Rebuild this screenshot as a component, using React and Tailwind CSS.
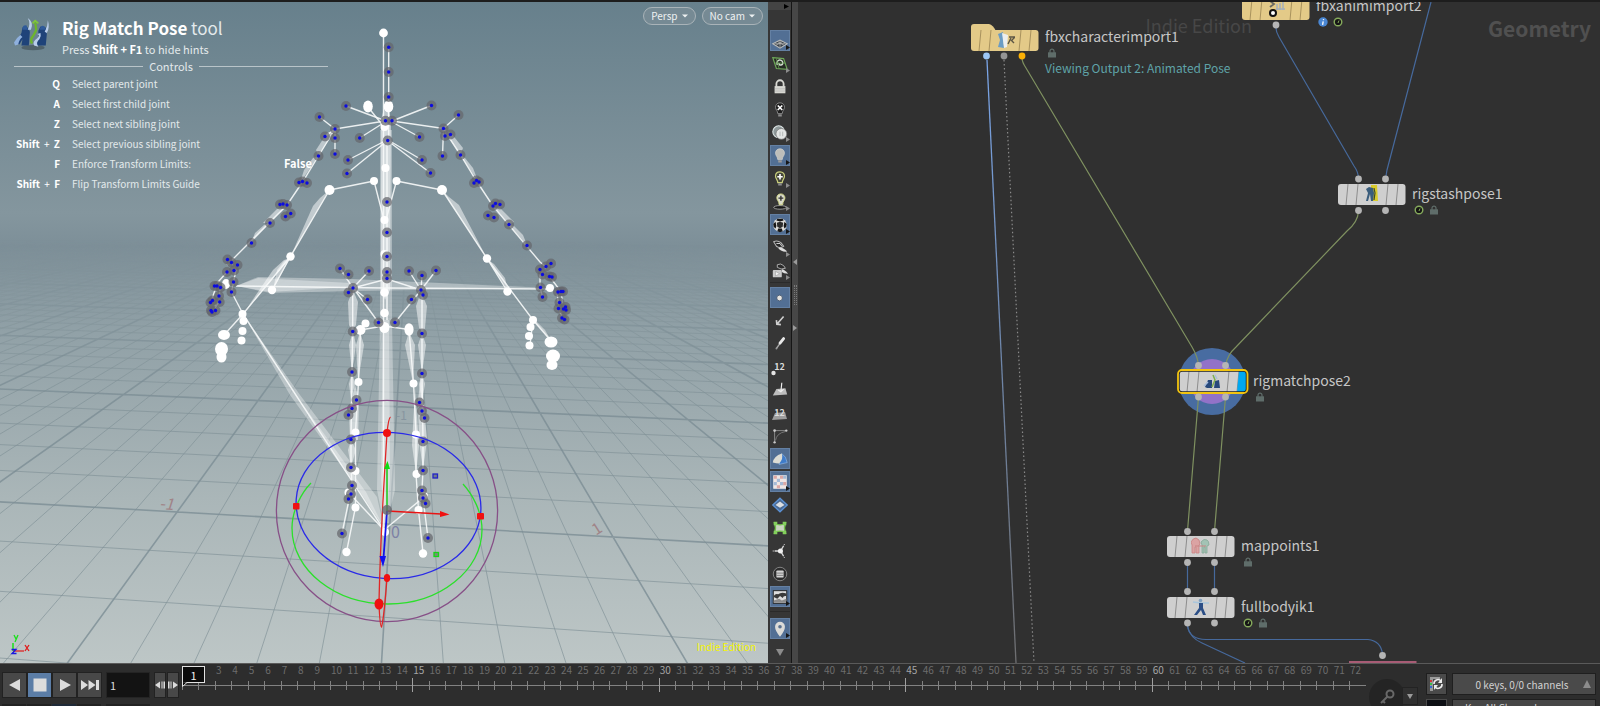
import React, { useState } from "react";

// ---------- viewport data ----------

// ground plane camera: world (x, z) -> screen
const project = (x, z) => {
  const w = -0.02403 * x - 0.547 * z + 1;
  return [
    ((208.5 * x - 224.1 * z + 389.8) / w).toFixed(1),
    ((-0.113 * x - 104.9 * z + 524.2) / w).toFixed(1),
  ];
};

const buildGrid = () => {
  let minor = "";
  let major = "";
  const add = (i, a, b) => {
    const d = `M${a[0]} ${a[1]}L${b[0]} ${b[1]}`;
    if (i % 5 === 0) major += d;
    else minor += d;
  };
  for (let i = -65; i <= 65; i++) add(i, project(i / 5, -11), project(i / 5, 0.9));
  for (let i = -55; i <= 4; i++) add(i, project(-13, i / 5), project(13, i / 5));
  return { minor, major };
};

const grid = buildGrid();

const blueJoints = [
  [388.7, 47.3], [388.7, 72], [388.7, 97], [385.5, 120.7], [392, 120.7], [387.7, 140.5],
  [346, 106], [431.5, 105.5], [319.5, 117], [335, 129], [325, 136.5], [335, 138], [335, 154],
  [318.5, 156], [359.7, 138], [419.5, 137], [348, 160], [347, 173.5], [422, 160], [430.5, 173],
  [387, 202], [302.5, 181.5], [299, 182.5], [307, 183], [287, 205], [283, 204], [280, 204.5],
  [290.7, 213.5], [285.5, 216.5], [458.5, 115], [443.5, 128.5], [445, 136], [450.5, 134.5],
  [442.5, 156], [460.5, 155], [476.5, 180.5], [474, 183], [479, 182], [493, 206], [495.5, 203.5],
  [500, 204.5], [488, 215.5], [494, 217.5], [270, 223], [251.5, 243], [227.5, 259.5],
  [231.5, 262.5], [237.5, 265], [234, 270.5], [227, 272], [233.5, 282], [231.5, 292],
  [214.5, 286], [217, 286], [220.5, 287.5], [219, 296], [219.7, 302], [210.5, 302.5],
  [212.5, 300.5], [211, 310.5], [215.5, 310.5], [212, 312], [340, 268.5], [348.5, 274.5],
  [369, 271], [353, 288], [348.5, 292.5], [367.5, 299.5], [378.5, 322.5], [395, 322.5],
  [409, 271], [422, 275.5], [436, 270.5], [421, 290], [423, 295], [411.5, 299.5],
  [352.7, 331.5], [422, 333.5], [352, 372], [422, 373.5], [387, 232.5], [387, 256.5],
  [387, 272], [387, 278.5], [509, 224.5], [527, 245.5], [546, 266.5], [551, 263.5],
  [540, 269.5], [542.5, 274.5], [549.5, 276.5], [552, 277], [540.5, 287.5], [542.5, 297],
  [558, 292], [561, 291.5], [563, 291.5], [559.5, 302.5], [558.5, 308.5], [563.5, 309],
  [565.5, 307], [566, 310], [562, 318], [564.5, 319.5], [356.5, 400], [352, 408.5],
  [348.5, 415], [419.5, 402.5], [422, 411], [424.5, 418], [351, 439.5], [423, 441.5],
  [351, 467.5], [423, 470.5], [352, 485.5], [351, 494], [348.5, 499], [422, 490.5],
  [423, 498], [425.5, 503.5], [342, 533.5], [428, 538],
];

// x, y, rx, ry
const whiteJoints = [
  [383.5, 33, 4.4, 4.4], [368, 106.5, 4.8, 6], [388.5, 106.5, 4.8, 6], [384.5, 127, 4, 4],
  [385.5, 168, 4, 4], [374, 181, 4, 4], [396.5, 181, 4, 4], [329.5, 190, 5, 5], [442, 190, 5, 5],
  [384.5, 220, 4, 4], [384.5, 254, 4, 4], [384.5, 292.5, 4.3, 4.3], [384.5, 313, 4.3, 4.3],
  [384.5, 327.5, 5, 5.5], [290.5, 256.5, 4.2, 4.2], [272, 290, 4.2, 4.2], [226, 284, 4, 5],
  [242.5, 314, 4, 4], [243.5, 321, 4, 4], [242.5, 331, 4, 4], [241.5, 340.5, 4, 4],
  [224, 335, 6, 5], [221.5, 349, 6.5, 7], [221.5, 357, 5, 5.5], [487, 258.5, 4.2, 4.2],
  [507.5, 291.5, 4.2, 4.2], [550, 288, 4, 4], [533, 320, 4, 4], [530.5, 327, 4, 4],
  [529, 336, 4, 4], [529.5, 345.5, 4, 4], [551, 342, 6.5, 5.5], [553, 356, 7, 6.5],
  [552, 365, 5.5, 5], [360.5, 330, 5, 5], [365.5, 323.5, 4, 4], [409, 329.5, 4.6, 6.2],
  [358.5, 382, 4, 4], [413.5, 383.5, 4, 4], [355.5, 432.5, 4, 4], [416, 434.5, 4, 4],
  [355.5, 471, 4, 4], [416.5, 474, 4, 4], [348.5, 492.5, 4, 4], [355.5, 507.5, 4, 4],
  [424, 496, 4, 4], [418.5, 510, 4, 4], [346.5, 552, 4.2, 4.2], [423, 553.5, 4.2, 4.2],
  [385, 532, 4, 4],
];

const boneLines = [
  "M383.5 33V530M388.7 47V140M386 121L346 106M385 121L335 129L319.5 117M385 122L359.7 138",
  "M392 121L431.5 105.5M392 121L443.5 128.5L458.5 115M392 122L419.5 137M368 107L384 127M388.5 107V127",
  "M387 140L348 160M387 141L347 173.5M388 140L422 160M388 141L430.5 173",
  "M335 129V154M335 129L325 136.5M443.5 129L442.5 156M335 129L318.5 156L302.5 182L287 205",
  "M443.5 129L460.5 155L476.5 181L493 206M374 181L329.5 190M396.5 181L442 190M374 181L384 220M396.5 181L386 220",
  "M287 205L227 265M231 262L236 270L233.5 282L231.5 292L243 314M227 272L214.5 286M220 287L219 302L213 311M216 287L211 302",
  "M493 206L540 262L546 267M546 267L540 275V287L542.5 297M549 276L561 291.5L563.5 309M557 292L559 309L563 319",
  "M290.5 256.5L243 314L224 335M272 290L290.5 256.5M329.5 190L290.5 256.5M442 190L487 258.5L533 320L552 342M487 258.5L507.5 291.5M533 320L530 345",
  "M236 286L384 288L550 289M353 288L340 268.5M353 288L369 271M353 288L387 279L421 290M353 288L367.5 299.5M354 289L378.5 322.5",
  "M421 290L409 271M421 290L422 275M421 290L436 270.5M421 290L395 322.5M360 330L384 326L409 329.5",
  "M352.7 288V331L352 372L351 439V467L352 485L342 533.5M422 290V373L423 441V470L422 490L428 538",
  "M360.5 330L358.5 382L355.5 432V471L355.5 507L346.5 552M409 330L413.5 383L416 434V474L418.5 510L423 553",
  "M243 314L384 530M349 493L384 530L424 497",
];

// long, mostly see-through bones
const bigBones = [
  "236,286 258,277 353,279 550,288 353,291 270,293",
  "236,286 258,278 350,283 350,287 270,292",
  "243,314 300,395 377,497 384,528 355,485 290,395",
  "243,314 296,395 366,492 384,528",
  "380,130 392,130 392,320 395,490 385,530 377,490 380,320",
  "383,320 389,320 390,480 385,530 381,480",
];

const limbBones = [
  "381,120 386,100 391,120 390,290 385,300 381,290",
  "353,290 348,302 349,325 352,331 356,325 358,302",
  "421,292 416,306 419,328 423,333 425,328 427,306",
  "353,331 349,345 352,372 356,345",
  "422,333 418,345 422,373 426,345",
  "360,332 356,345 358,382 364,345",
  "409,332 405,345 413,383 415,345",
  "352,372 349,384 351,400 355,384",
  "422,373 419,384 422,402 425,384",
  "355,385 349,410 350,440 358,440 359,400",
  "351,440 348,450 351,467 356,450",
  "421,375 418,400 419,440 423,470 427,440",
  "415,388 412,445 416,474 419,445",
  "335,130 318.5,156 316,150 327,133",
  "318.5,156 300,183 304,170 313,158",
  "444,130 460.5,155 463,148 451,133",
  "460,155 478,181 473,168 465,158",
  "287,206 270,223 263,223 277,209",
  "270,223 251,243 255,233 264,225",
  "493,206 509,225 514,222 500,208",
  "509,225 527,245 523,235 514,226",
  "329.5,190 290.5,256.5 313,206 320,198",
  "442,190 487,258.5 459,205 449,197",
  "290,258 243,314 273,270 284,260",
  "290,258 273,290 277,270 284,261",
  "487,259 508,291 505,278 494,264",
  "533,320 552,342 545,330 537,322",
];

const controls = [
  { keys: ["Q"], action: "Select parent joint" },
  { keys: ["A"], action: "Select first child joint" },
  { keys: ["Z"], action: "Select next sibling joint" },
  { keys: ["Shift", "Z"], action: "Select previous sibling joint" },
  { keys: ["F"], action: "Enforce Transform Limits:" },
  { keys: ["Shift", "F"], action: "Flip Transform Limits Guide" },
];

const PoseLogo = ({ className }) => (
  <svg viewBox="0 0 34 34" className={className} aria-hidden="true">
    <ellipse cx="18" cy="29" rx="11" ry="2.5" fill="#3d4b52" opacity="0.6" />
    <path d="M3 25Q4 19 7 15L8 10L13 10L15 14L14 27H7L8 21L5 26Z" fill="#1f4379" />
    <path d="M23 13L25 9L30 10L31 16L30 27H21L23 20Z" fill="#1f4379" />
    <path d="M0 24Q3 19 6 17L8 19Q5 21 4 26L1 27Z" fill="#8fb0dd" />
    <path d="M13 1Q16 6 13 12L16 12Q19 5 13 1ZM32 3Q34 10 31 15L29 14Q32 9 32 3Z" fill="#b9cdea" />
    <path d="M22 16Q25 17 22 20Q17 23 19 27L23 28Q20 24 24 21Q26 18 25 15Z" fill="#b9cdea" />
    <path d="M8 10Q9 7 12 8L13 12H8ZM25 10Q26 7 29 9L30 12H24Z" fill="#2f5a99" />
    <path d="M20 5L21 12Q20 15 18 18Q15 21 17 25" stroke="#6db52c" strokeWidth="2.2" fill="none" />
    <path d="M17.500 6L20 3.500L23 6" stroke="#7fc63a" strokeWidth="1.600" fill="none" />
  </svg>
);

// ---------- 3D viewport ----------

const Scene = () => (
  <svg
    viewBox="0 2 768 661"
    preserveAspectRatio="xMidYMid slice"
    className="absolute inset-0 h-full w-full"
    aria-hidden="true"
  >
    <defs>
      <linearGradient id="sky" x1="0" y1="0" x2="0" y2="1">
        <stop offset="0" stopColor="#67808c" />
        <stop offset="0.32" stopColor="#84969e" />
        <stop offset="0.37" stopColor="#7d8f98" />
        <stop offset="0.5" stopColor="#91a1a7" />
        <stop offset="0.75" stopColor="#aab6b8" />
        <stop offset="1" stopColor="#bdc6c6" />
      </linearGradient>
      <linearGradient id="fade" gradientUnits="userSpaceOnUse" x1="0" y1="240" x2="0" y2="400">
        <stop offset="0" stopColor="#fff" stopOpacity="0" />
        <stop offset="0.25" stopColor="#fff" stopOpacity="0.4" />
        <stop offset="0.6" stopColor="#fff" stopOpacity="0.8" />
        <stop offset="1" stopColor="#fff" />
      </linearGradient>
      <mask id="ground" maskUnits="userSpaceOnUse" x="0" y="0" width="768" height="663">
        <rect y="240" width="768" height="423" fill="url(#fade)" />
      </mask>
    </defs>
    <rect y="2" width="768" height="661" fill="url(#sky)" />
    <g mask="url(#ground)" fill="none">
      <path d={grid.minor} stroke="#7f9097" strokeWidth="1" opacity="0.65" />
      <path d={grid.major} stroke="#7c8d95" strokeWidth="1.6" opacity="0.8" />
    </g>

    {/* grid unit labels */}
    <g className="font-['Noto_Sans_CJK_SC',sans-serif]" fontSize="16">
      <text x="159" y="509" fill="#a08488" transform="rotate(4 159 509)" fontStyle="italic">-1</text>
      <text x="592" y="534" fill="#a08488" transform="rotate(-32 597 528)">1</text>
      <text x="391" y="538" fill="#7d81a5">0</text>
      <text x="396" y="420" fill="#87959f" fontSize="12">-1</text>
    </g>

    {/* bones */}
    <g fill="#fff" fillOpacity="0.34">
      {bigBones.map((points) => (
        <polygon key={points} points={points} />
      ))}
    </g>
    <g fill="#fff" fillOpacity="0.5">
      {limbBones.map((points) => (
        <polygon key={points} points={points} />
      ))}
    </g>
    <g fill="none" stroke="#f7f9fa" strokeWidth="1.4" strokeOpacity="0.9">
      {boneLines.map((d) => (
        <path key={d} d={d} />
      ))}
      <path d="M387 140V320" strokeWidth="2" strokeOpacity="0.7" />
    </g>
    <g fill="#fff">
      {whiteJoints.map(([x, y, rx, ry]) => (
        <ellipse key={`${x}-${y}`} cx={x} cy={y} rx={rx} ry={ry} />
      ))}
    </g>
    <g fill="#65666c" fillOpacity="0.72">
      {blueJoints.map(([x, y]) => (
        <circle key={`${x}-${y}`} cx={x} cy={y} r="5" />
      ))}
    </g>
    <g fill="#0c0ce0">
      {blueJoints.map(([x, y]) => (
        <circle key={`${x}-${y}`} cx={x} cy={y} r="1.7" />
      ))}
    </g>

    {/* transform handle */}
    <g fill="none" strokeWidth="1.3">
      <circle cx="387" cy="511" r="110.6" stroke="#875087" />
      <ellipse cx="388.5" cy="505.5" rx="92.5" ry="73" stroke="#2a2ae8" transform="rotate(4 388.5 505.5)" />
      <path
        d="M311 483C302 492 292 510 292 528C292 570 335 604 388 604C440 604 482 570 482 530C482 512 473 495 463 484"
        stroke="#2be02b"
      />
      <path d="M390.500 417Q388.500 418 387 433C384 480 380 550 379 604Q380 627 381.500 627Q384 618 387 578" stroke="#e02626" />
      <path d="M387 511L441 514" stroke="#e81414" strokeWidth="1.5" />
      <path d="M387 511V468" stroke="#14c814" strokeWidth="1.5" />
      <path d="M387 511L383.500 558" stroke="#1414e8" strokeWidth="1.8" />
      <rect x="433" y="474" width="4.500" height="4" fill="#6f7b8c" stroke="#2222c8" />
      <rect x="434" y="552.500" width="4.500" height="4" fill="#7c8a7c" stroke="#14d814" />
    </g>
    <circle cx="387" cy="510" r="5" fill="#66676d" fillOpacity="0.8" />
    <path d="M440 511L449.500 514.500L440 517Z" fill="#f01010" />
    <path d="M384 469L387.500 461L390 469Z" fill="#10dc10" />
    <path d="M379.500 556H386L383 567Z" fill="#1010f0" />
    <g fill="#f01010">
      <circle cx="387" cy="433" r="4" />
      <rect x="293" y="503" width="6.500" height="6.500" rx="1" />
      <rect x="477" y="513" width="7" height="6.500" rx="1" />
      <ellipse cx="387" cy="578" rx="3.200" ry="4" />
      <ellipse cx="379" cy="604" rx="4.500" ry="5.500" />
    </g>
  </svg>
);

const MenuPill = ({ children }) => (
  <button className="flex h-[18px] items-center gap-1 rounded-full border border-[#a9b3b8] bg-[#768a94] px-[7px] text-[10px] leading-none text-[#eef1f2]">
    {children}
    <svg viewBox="0 0 6 4" className="h-1 w-[6px]" aria-hidden="true">
      <path d="M0 0.500H6L3 3.500Z" fill="currentColor" />
    </svg>
  </button>
);

const Viewport = () => (
  <section className="relative w-[48%] shrink-0 overflow-hidden">
    <Scene />
    <div className="relative flex h-full flex-col justify-between">
      <div className="flex items-start justify-between">
        <div className="w-[328px] pl-[14px] pt-[13px] text-[#e3e9eb]">
          <div className="flex gap-3">
            <PoseLogo className="mt-[2px] h-9 w-9 shrink-0" />
            <div>
              <h1 className="whitespace-nowrap text-[17px] leading-[26px]">
                <b className="text-white">Rig Match Pose</b> tool
              </h1>
              <p className="text-[11px] leading-4">
                Press <b className="text-white">Shift + F1</b> to hide hints
              </p>
            </div>
          </div>
          <div className="mt-px flex items-center gap-[6px] text-[11px] leading-4">
            <span className="h-px flex-1 bg-[#b9c4c9]" />
            Controls
            <span className="h-px flex-1 bg-[#b9c4c9]" />
          </div>
          <dl className="text-[10px] leading-5">
            {controls.map(({ keys, action }) => (
              <div key={action} className="flex gap-3">
                <dt className="w-[46px] whitespace-nowrap text-right font-bold text-white">
                  {keys.length > 1 && (
                    <>
                      {keys[0]} <span className="px-[2px] font-normal">+</span>{" "}
                    </>
                  )}
                  {keys[keys.length - 1]}
                </dt>
                <dd>{action}</dd>
              </div>
            ))}
          </dl>
        </div>
        <div className="flex gap-[6px] pr-[5px] pt-[5px]">
          <MenuPill>Persp</MenuPill>
          <MenuPill>No cam</MenuPill>
        </div>
      </div>
      <div className="flex items-end justify-between pb-[6px] pl-[10px] pr-3">
        <svg viewBox="0 0 22 24" className="h-6 w-[22px]" fill="none" aria-hidden="true">
          <path d="M3 18V10" stroke="#19e019" strokeWidth="1.500" />
          <path d="M3 18H14" stroke="#e01919" strokeWidth="1.200" />
          <path d="M4 2L6 6M8 2L5 9" stroke="#19e019" strokeWidth="1.300" />
          <path d="M15 12L19 18M19 12L15 18" stroke="#e01919" strokeWidth="1.300" />
          <path d="M1.500 16.500H6L2 20.500H6.500" stroke="#1919e0" strokeWidth="1.300" />
        </svg>
        <span className="text-[10px] leading-5 text-[#f4f400]">Indie Edition</span>
      </div>
    </div>
    <span className="absolute left-[284px] top-[151px] text-[11px] font-bold leading-5 text-white">False</span>
  </section>
);

// ---------- display toolbar ----------

const bulb = "M10 2C6.500 2 5 4.500 5 7C5 9.500 7.500 11 7.500 14H12.500C12.500 11 15 9.500 15 7C15 4.500 13.500 2 10 2Z";

const icons = {
  plane: (
    <>
      <path d="M2 13L10 9L18 13L10 18Z" fill="#3a4148" stroke="#b9bbbb" strokeWidth="1.200" />
      <path d="M7 10.500L15 15M13 10.500L5 15M10 9V17M4 13H16" stroke="#b9bbbb" fill="none" strokeWidth="0.800" />
    </>
  ),
  reference: (
    <>
      <path d="M2 3L14 4L18 16L6 15Z" fill="#262b24" stroke="#6fa85a" strokeWidth="1.300" />
      <path d="M7 11C5 5 12 4 13 8C14 12 8 12 9 9" fill="none" stroke="#d4dcd2" strokeWidth="1.600" />
      <path d="M6 4L9 15M4 9H16" stroke="#6fa85a" strokeWidth="0.800" />
    </>
  ),
  lock: (
    <>
      <path d="M6 10V6.500A4 4 0 0 1 14 6.500V10" fill="none" stroke="#d8d8d2" strokeWidth="2" />
      <rect x="4" y="9" width="12" height="8" fill="#d8d8d2" />
      <path d="M4 12H16M4 14.500H16" stroke="#aaa" strokeWidth="0.600" />
    </>
  ),
  bulbOff: (
    <>
      <path d={bulb} fill="#1d1d1d" stroke="#8b8b8b" />
      <path d="M7.500 5L12.500 10M12.500 5L7.500 10" stroke="#fff" strokeWidth="1.800" />
      <path d="M8 16H12" stroke="#8b8b8b" strokeWidth="2.500" />
    </>
  ),
  spheres: (
    <>
      <circle cx="8.500" cy="8.500" r="6.500" fill="#8e9899" stroke="#e0e8e8" strokeWidth="1.200" />
      <circle cx="11.500" cy="11" r="6" fill="#e4e6e5" stroke="#777" strokeWidth="0.800" />
      <path d="M10 8.500V13.500M13 8.500V13.500" stroke="#b0b4b3" />
    </>
  ),
  bulbOn: (
    <>
      <path d={bulb} fill="#bdbdba" stroke="#dad9d4" strokeWidth="0.700" />
      <path d="M8 16H12" stroke="#9a9a9a" strokeWidth="2.500" />
    </>
  ),
  bulbAdd: (
    <>
      <path d={bulb} fill="#45463a" stroke="#c9cf7d" strokeWidth="1.300" />
      <path d="M10 4.500V10.500M7 7.500H13" stroke="#fff" strokeWidth="1.800" />
      <path d="M8 16H12" stroke="#8b8b8b" strokeWidth="2.500" />
    </>
  ),
  bulbShadow: (
    <>
      <ellipse cx="10" cy="16" rx="7" ry="2" fill="#191919" stroke="#c4c4c4" strokeWidth="0.800" />
      <path d="M11 1C7.500 1 6.500 3.500 6.500 5.500C6.500 8 9 9 9 13H13C13 9 15.500 8 15.500 5.500C15.500 3.500 14 1 11 1Z" fill="#d9dacb" stroke="#d8dd8a" />
      <path d="M11 3V8.500M8.300 5.700H13.700" stroke="#333" strokeWidth="1.500" />
    </>
  ),
  shader: (
    <>
      <circle cx="10" cy="10" r="7.500" fill="#dddcd9" />
      <path d="M7 3L13 3L14 5L10 6L6 5ZM2.500 9L5 6.500L6 11L5 14L3 12ZM17.500 9L15 6.500L14 11L15 14L17 12ZM8 14L12 14L13 17L10 18L7 17Z" fill="#151515" />
      <path d="M6.500 7.500L10 6.500L13.500 7.500L13 12L10 13.500L7 12Z" fill="#2c2c2c" />
    </>
  ),
  cards: (
    <>
      <path d="M3 3Q7 1 11 4L14 8Q10 11 6 8Z" fill="#2a2a2a" stroke="#b5b5b5" strokeWidth="1.200" />
      <path d="M6 5L10 5L12 8" stroke="#e0e0e0" fill="none" />
      <path d="M8 10Q12 8 18 14Q12 15 8 10Z" fill="#dedede" />
    </>
  ),
  snapshot: (
    <>
      <path d="M7 3Q11 1 14 4L16 7Q11 9 7 6Z" fill="#2a2a2a" stroke="#b5b5b5" />
      <path d="M12 8Q15 8 19 13Q14 13 12 11Z" fill="#dedede" />
      <rect x="2" y="9" width="10" height="8" rx="1" fill="#c9c9c9" />
      <path d="M5 10.500L9.500 13L5 15.500Z" fill="#f2f2f2" stroke="#888" strokeWidth="0.500" />
    </>
  ),
  point: <circle cx="9.500" cy="10" r="3.200" fill="#e6e3dd" stroke="#40546e" />,
  normalIn: <path d="M14 5L7 13M6 9L6.500 13.500L11 14" fill="none" stroke="#d0d0d0" strokeWidth="1.800" />,
  normalOut: (
    <>
      <path d="M6 15L11 8" stroke="#a8a8a8" strokeWidth="1.500" />
      <path d="M10 9L14 4" stroke="#e8e8e8" strokeWidth="3.200" strokeLinecap="round" />
      <circle cx="6" cy="15" r="1" fill="#999" />
    </>
  ),
  primNormal: (
    <>
      <path d="M6 9L16 8L18 15L2 16Z" fill="#bdbdbd" />
      <path d="M12 2L11 12M8 10L11 12L14 9" stroke="#eee" strokeWidth="1.300" fill="none" />
    </>
  ),
  hull: (
    <>
      <path d="M4 17V4H17" fill="none" stroke="#8f8f8f" />
      <path d="M5 15Q6 7 16 5" fill="none" stroke="#7d7d7d" />
      <circle cx="4" cy="4" r="1.500" fill="#c9c9c9" />
      <circle cx="17" cy="4" r="1.300" fill="#c9c9c9" />
      <circle cx="4" cy="17" r="1.300" fill="#c9c9c9" />
    </>
  ),
  backface: (
    <>
      <path d="M12 4L16 8L18 14L9 16Z" fill="#3f7cc9" stroke="#9ec3ef" strokeWidth="0.600" />
      <path d="M2 14Q3 7 12 4Q14 10 9 15Q6 15 2 14Z" fill="#dcdcd4" />
    </>
  ),
  checker: (
    <>
      <rect x="3" y="3" width="14" height="14" fill="#f0e6e4" stroke="#e6e6e6" />
      <path d="M3 3H6.500V6.500H3ZM10 3H13.500V6.500H10ZM6.500 13.500H10V17H6.500ZM13.500 13.500H17V10H13.500Z" fill="#dba8a5" />
      <path d="M6.500 6.500H10V10H6.500ZM13.500 6.500H17V3H13.500ZM10 10H13.500V13.500H10ZM3 10H6.500V13.500H3Z" fill="#a5bad6" />
    </>
  ),
  group: (
    <>
      <path d="M10 2.500L18 10L10 17.500L2 10Z" fill="#4a6a94" stroke="#5c92d6" strokeWidth="1.500" />
      <path d="M10 6L15 10L10 13L5 10Z" fill="#dcdfe2" />
    </>
  ),
  lattice: (
    <>
      <path d="M4 5Q10 8 16 5Q14 10 16 15Q10 12 4 15Q6 10 4 5Z" fill="#c9d3c0" stroke="#71c04a" strokeWidth="1.500" />
      <path d="M3 3H7V7H3ZM13 3H17V7H13ZM3 13H7V17H3ZM13 13H17V17H13Z" fill="#83cf5c" />
    </>
  ),
  origin: (
    <>
      <path d="M9 10H2M11.500 8.500L15 2.500M11.500 11.500L15 17.500" stroke="#d8d8d8" strokeWidth="1.500" strokeDasharray="5 1.200" />
      <circle cx="10.500" cy="10" r="2.800" fill="#f1f1f1" />
    </>
  ),
  list: (
    <>
      <circle cx="10" cy="10" r="7.500" fill="#2c2c2c" stroke="#8b8b8b" />
      <rect x="6" y="6" width="8" height="8" rx="1" fill="#d4d4d4" />
      <path d="M6 9H14M6 11.500H14" stroke="#777" />
    </>
  ),
  image: (
    <>
      <rect x="2.500" y="3" width="15" height="14" fill="#ddd" stroke="#1b1b1b" />
      <path d="M3 10Q4 6 8 7Q11 4 17 6V9Q14 8 13 11L10 9L7 12Z" fill="#3a3a3a" />
      <path d="M3 14L9 12L12 14L17 12V16.500H3Z" fill="#8c8c8c" />
    </>
  ),
  pin: (
    <>
      <path d="M10 18.500Q4.500 12 4.500 7.500A5.500 5.500 0 0 1 15.500 7.500Q15.500 12 10 18.500Z" fill="#dbdbd8" />
      <circle cx="10" cy="7.500" r="2" fill="#5a718e" />
    </>
  ),
};

const Numbered = ({ prim }) => (
  <span className="relative text-[9px] font-bold leading-none text-[#dcdcdc]">
    <svg viewBox="0 0 20 20" className="absolute -left-1 -top-1 h-5 w-5" aria-hidden="true">
      {prim ? (
        <path d="M5 9L15 8L17 15L2 16Z" fill="#9d9d9d" />
      ) : (
        <circle cx="3.500" cy="15" r="2.200" fill="#e4e4e4" />
      )}
    </svg>
    <span className="relative">12</span>
  </span>
);

const topTools = [
  { icon: "plane", label: "Construction plane", active: true, menu: true },
  { icon: "reference", label: "Reference plane", menu: true },
  { icon: "lock", label: "Lock camera" },
  { icon: "bulbOff", label: "Disable lighting" },
  { icon: "spheres", label: "Headlight", menu: true },
  { icon: "bulbOn", label: "Normal lighting", active: true, menu: true },
  { icon: "bulbAdd", label: "High quality lighting", menu: true },
  { icon: "bulbShadow", label: "Shadows", menu: true },
  { icon: "shader", label: "Materials", active: true, menu: true },
  { icon: "cards", label: "Shading", menu: true },
  { icon: "snapshot", label: "Snapshot", menu: true },
];

const displayTools = [
  { icon: "point", label: "Points", active: true },
  { icon: "normalIn", label: "Point normals" },
  { icon: "normalOut", label: "Point trails" },
  { icon: "pointNumbers", label: "Point numbers" },
  { icon: "primNormal", label: "Primitive normals" },
  { icon: "primNumbers", label: "Primitive numbers" },
  { icon: "hull", label: "Hulls" },
  { icon: "backface", label: "Backfaces", active: true },
  { icon: "checker", label: "UV texture", active: true, menu: true },
  { icon: "group", label: "Group list" },
  { icon: "lattice", label: "Lattice" },
  { icon: "origin", label: "Origin gnomon" },
  { icon: "list", label: "Visualizers" },
  { icon: "image", label: "Background image", active: true, menu: true },
];

const ToolButton = ({ icon, label, active, menu }) => (
  <button
    aria-label={label}
    className={`relative flex h-[21px] w-5 items-center justify-center border ${
      active ? "border-[#6480a3] bg-[#526f94]" : "border-transparent"
    }`}
  >
    {icon === "pointNumbers" || icon === "primNumbers" ? (
      <Numbered prim={icon === "primNumbers"} />
    ) : (
      <svg viewBox="0 0 20 20" className="h-[18px] w-[18px]" aria-hidden="true">
        {icons[icon]}
      </svg>
    )}
    {menu && (
      <svg
        viewBox="0 0 4 5"
        className={`absolute -right-px bottom-0 h-[5px] w-1 ${active ? "text-[#161616]" : "text-[#8c8c8c]"}`}
        aria-hidden="true"
      >
        <path d="M0 0V5L4 2.500Z" fill="currentColor" />
      </svg>
    )}
  </button>
);

const DisplayToolbar = () => (
  <aside className="flex w-6 shrink-0 flex-col items-center overflow-hidden border-r border-[#161616] bg-[#363636]">
    <div className="flex h-2 w-full items-center justify-end bg-[#444] pr-[2px]">
      <svg viewBox="0 0 5 5" className="h-[5px] w-[5px]" aria-hidden="true">
        <path d="M0 0V5L5 2.500Z" />
      </svg>
    </div>
    <div className="mt-5 flex flex-col gap-[2px]">
      {topTools.map((tool) => (
        <ToolButton key={tool.label} {...tool} />
      ))}
    </div>
    <div className="mt-px flex flex-col gap-[2px] border-t border-[#2a2a2a] pt-1">
      {displayTools.map((tool) => (
        <ToolButton key={tool.label} {...tool} />
      ))}
    </div>
    <div className="mt-1 flex flex-col items-center border-t border-[#2a2a2a] pt-[6px]">
      <ToolButton icon="pin" label="Pin view" active menu />
      <svg viewBox="0 0 8 7" className="mt-[10px] h-[7px] w-2" aria-hidden="true">
        <path d="M0 0H8L4 7Z" fill="#8c8c8c" />
      </svg>
    </div>
  </aside>
);

const Splitter = () => (
  <div className="flex w-[6px] shrink-0 flex-col items-center justify-center gap-5 bg-[#474747] pb-[76px]">
    <svg viewBox="0 0 4 6" className="h-[6px] w-1" aria-hidden="true">
      <path d="M4 0V6L0 3Z" fill="#9a9a9a" />
    </svg>
    <span className="h-5 w-[3px] border-x border-dotted border-[#7a7a7a]" />
    <svg viewBox="0 0 4 6" className="h-[6px] w-1" aria-hidden="true">
      <path d="M0 0V6L4 3Z" fill="#9a9a9a" />
    </svg>
  </div>
);

// ---------- network editor ----------

const pan = { x: 798, y: 2 };

const nodes = [
  { name: "fbxcharacterimport1", note: "Viewing Output 2: Animated Pose", x: 971, y: 30, kind: "subnet", icon: "character", flags: ["lock"], outputs: [[986.5, 56, "#9cc6f5"], [1004, 56, "#949494"], [1022, 56, "#fbb005"]] },
  { name: "fbxanimimport2", x: 1242, y: -1, kind: "subnet", icon: "anim", flags: ["info", "clock"], outputs: [[1276, 25]] },
  { name: "rigstashpose1", x: 1338, y: 184, icon: "stash", flags: ["clock", "lock"], inputs: [[1358.5, 179], [1385.5, 179]], outputs: [[1358.5, 210.5], [1385.5, 210.5]] },
  { name: "rigmatchpose2", x: 1179, y: 371, kind: "current", icon: "match", flags: ["lock"], inputs: [[1198.5, 365.5], [1225.5, 365.5]], outputs: [[1198.5, 397], [1225.5, 397]] },
  { name: "mappoints1", x: 1167, y: 536, icon: "map", flags: ["lock"], inputs: [[1187.5, 531.5], [1214.5, 531.5]], outputs: [[1187.5, 562.5], [1214.5, 562.5]] },
  { name: "fullbodyik1", x: 1167, y: 597, icon: "ik", flags: ["clock", "lock"], inputs: [[1187.5, 591.5], [1214.5, 591.5]], outputs: [[1187.5, 623], [1214.5, 623]] },
];

const wires = [
  { d: "M1004 60L1034 663", color: "#8a8a8a", dash: "1.500 2.500" },
  { d: "M1022 58Q1022 62 1026 68L1192 347Q1198 357 1198.500 366", color: "#7f9160" },
  { d: "M1276 28Q1276 32 1279 37L1354 166Q1358.500 172 1358.500 179", color: "#46699c" },
  { d: "M1431 2L1387 170L1385.500 179", color: "#46699c" },
  { d: "M1358.500 211Q1358 222 1347 231L1236 347Q1227 355 1225.500 366", color: "#7f9160" },
  { d: "M1198.500 397L1187.500 531M1225.500 397L1214.500 531", color: "#7f9160" },
  { d: "M1187.500 562V592M1214.500 562V592", color: "#46699c" },
  { d: "M1187.500 626Q1189 639 1206 639.500H1368Q1381 641 1382.500 654", color: "#46699c" },
  { d: "M1187.500 626Q1190 638 1202 643L1245 663", color: "#46699c" },
];

const nodeIcons = {
  character: (
    <>
      <path d="M3 3L8 1L9 17L3 16L5 9Z" fill="#6a9cc4" />
      <path d="M7 2L13 4L12 16L9 17Z" fill="#eceff0" />
      <path d="M14 6H20L17 9M16 7L13 13M16 9L19 12" stroke="#5c5644" strokeWidth="1.400" fill="none" />
    </>
  ),
  anim: (
    <>
      <path d="M4 1L8 4L4 7" stroke="#6a6a62" strokeWidth="1.800" fill="none" />
      <path d="M11 4V10M14 3V10M17 2V10M10 9H19" stroke="#a4b0ba" strokeWidth="1.500" fill="none" />
      <circle cx="7" cy="13" r="3" fill="#fff" stroke="#111" strokeWidth="2" />
    </>
  ),
  stash: (
    <>
      <path d="M9 0H15L16 16H9Z" fill="#d9cb2a" />
      <path d="M4 4L7 2L11 3L12 8L11 16H9L8 9L6 16H4L6 8Z" fill="#3a5d7c" />
      <path d="M12 3L13 8L12 15" stroke="#3e4a2a" strokeWidth="1.200" fill="none" />
    </>
  ),
  match: (
    <>
      <path d="M2 15L5 8L9 8V16H4ZM12 9L16 8L17 16H11Z" fill="#28497c" />
      <path d="M10 3L12 8L9 15" stroke="#7fae4d" strokeWidth="1.500" fill="none" />
      <path d="M12 3L14 7M1 14L5 10" stroke="#a9bddb" strokeWidth="1.500" />
    </>
  ),
  map: (
    <>
      <path d="M0 5Q2 1 5 1Q9 2 9 7L8 8V16H5V10H4V16H1V8Z" fill="#dba3a3" stroke="#c98383" strokeWidth="0.800" />
      <path d="M10 5Q13 1 16 3Q18 4 18 8L16 9V16H14V10H13V16H11V8Z" fill="#a3c3b5" stroke="#86a898" strokeWidth="0.800" />
      <path d="M4 9H15" stroke="#c98383" />
    </>
  ),
  ik: (
    <>
      <path d="M2 4L10 5L18 5" stroke="#a9c6dc" strokeWidth="1.500" fill="none" />
      <path d="M8 5L12 5L12 10L15 17H12L10 12L6 17H3L8 10Z" fill="#2b4e86" />
      <circle cx="9.500" cy="2.500" r="1.800" fill="#7fa0c0" />
    </>
  ),
};

const NodeBody = ({ x, y, kind, icon, inputs = [], outputs }) => {
  const fill = kind === "subnet" ? "#e3ca88" : "#cfcfcf";
  return (
    <g>
      <rect x={x} y={y} width="67.500" height="21" rx="3" fill={fill} />
      {kind === "subnet" && (
        <path
          d={`M${x} ${y + 5}V${y - 3}Q${x} ${y - 6} ${x + 3} ${y - 6}H${x + 18}Q${x + 22} ${y - 5} ${x + 25} ${y + 1}V${y + 5}Z`}
          fill={fill}
        />
      )}
      <path
        d={`M${x + 10} ${y}L${x + 8} ${y + 21}M${x + 20} ${y}L${x + 18} ${y + 21}M${x + 50} ${y}L${x + 48} ${y + 21}M${x + 60} ${y}L${x + 58} ${y + 21}`}
        stroke={kind === "subnet" ? "#a8925d" : "#8d8d8d"}
      />
      {kind === "current" && (
        <>
          <path d={`M${x + 60} ${y}H${x + 67.5}V${y + 21}H${x + 58}Z`} fill="#00a8f0" />
          <rect x={x} y={y} width="67.500" height="21" rx="3" fill="none" stroke="#222" strokeWidth="1.500" />
          <rect x={x - 1} y={y - 1} width="69.500" height="23" rx="4" fill="none" stroke="#f2c40f" strokeWidth="1.800" />
        </>
      )}
      <svg x={x + 24} y={y + 1} width="20" height="18" viewBox="0 0 20 18">
        {nodeIcons[icon]}
      </svg>
      {[...inputs, ...outputs].map(([cx, cy, color]) => (
        <circle key={`${cx}-${cy}`} cx={cx} cy={cy} r="3.400" fill={color || "#b5b5b5"} />
      ))}
    </g>
  );
};

const Flag = ({ type }) => (
  <svg viewBox="0 0 10 10" className="h-[10px] w-[10px]" aria-hidden="true">
    {type === "lock" && (
      <>
        <path d="M3 5V3.200A2 2 0 0 1 7 3.200V5" fill="none" stroke="#5f6d6a" strokeWidth="1.200" />
        <rect x="1" y="4.300" width="8" height="5.200" fill="#5f6d6a" />
      </>
    )}
    {type === "clock" && (
      <>
        <circle cx="5" cy="5" r="3.800" fill="#151515" stroke="#86ab5c" strokeWidth="1.400" />
        <path d="M5 6L6 3.500" stroke="#86ab5c" />
      </>
    )}
    {type === "info" && (
      <>
        <circle cx="5" cy="5" r="4.700" fill="#4a87d3" />
        <path d="M5.600 2.200L5.400 3.200M5.200 4.400L4.600 7.800" stroke="#fff" strokeWidth="1.300" />
      </>
    )}
  </svg>
);

const NetworkEditor = () => (
  <section className="relative min-w-0 flex-1 overflow-hidden bg-[#303030]">
    <span className="absolute right-[348px] top-[10px] text-lg leading-[26px] text-[#474747]">Indie Edition</span>
    <span className="absolute right-[9px] top-[10px] text-[21px] font-bold leading-8 text-[#505050]">Geometry</span>

    <svg viewBox="798 2 802 661" className="absolute left-0 top-0 h-[661px] w-[802px]" aria-hidden="true">
      <defs>
        <linearGradient id="wireFade" gradientUnits="userSpaceOnUse" x1="0" y1="60" x2="0" y2="663">
          <stop offset="0" stopColor="#7aa5e8" />
          <stop offset="0.400" stopColor="#6f8bb5" />
          <stop offset="1" stopColor="#6e6e70" />
        </linearGradient>
      </defs>
      {/* current node ring */}
      <circle cx="1212" cy="381.500" r="33.500" fill="#486ca1" />
      <circle cx="1212" cy="381.500" r="22.500" fill="#9272c8" />
      <path d="M987 60L1016 663" stroke="url(#wireFade)" strokeWidth="1.300" />
      {wires.map(({ d, color, dash }) => (
        <path key={d} d={d} stroke={color} strokeWidth="1.200" strokeDasharray={dash} fill="none" />
      ))}
      {nodes.map((node) => (
        <NodeBody key={node.name} {...node} />
      ))}
      <circle cx="1382.500" cy="655.500" r="3.400" fill="#b5b5b5" />
      <rect x="1349" y="661" width="67.500" height="4" fill="#a85c75" />
    </svg>

    {nodes.map(({ name, note, kind, x, y, flags }) => (
      <div
        key={name}
        className="absolute text-[#c6c6c6]"
        style={{ left: x + 74 - pan.x, top: y - (kind === "subnet" ? 4 : 1) - pan.y }}
      >
        <p className="text-sm leading-5">{name}</p>
        <div className="flex gap-[5px] pl-[2px] pt-[2px]">
          {flags.map((flag) => (
            <Flag key={flag} type={flag} />
          ))}
        </div>
        {note && <p className="whitespace-nowrap text-xs leading-5 text-[#5fa3a8]">{note}</p>}
      </div>
    ))}
  </section>
);

// ---------- playbar ----------

const frames = Array.from({ length: 72 }, (_, i) => i + 1);

const PlayButton = ({ label, active, small, onClick, children }) => (
  <button
    aria-label={label}
    onClick={onClick}
    className={`flex h-[26px] shrink-0 items-center justify-center border border-[#222] ${small ? "w-3" : "w-[25px]"} ${
      active ? "bg-[#5b7da6]" : "bg-[#484848]"
    }`}
  >
    <svg viewBox="0 0 20 16" className={small ? "h-2 w-[10px]" : "h-4 w-5"} fill="#dcdcdc" aria-hidden="true">
      {children}
    </svg>
  </button>
);

const Playbar = () => {
  const [frame, setFrame] = useState("1");
  const [playing, setPlaying] = useState(false);

  return (
    <footer className="flex h-[43px] shrink-0 overflow-hidden border-t border-[#5a5a5a] bg-[#2d2d2d]">
      <div className="flex w-[182px] shrink-0 flex-col gap-[6px] pl-[2px] pt-2">
        <div className="flex">
          <PlayButton label="Play backwards">
            <path d="M15 2V14L4 8Z" />
          </PlayButton>
          <PlayButton label="Stop" active={!playing} onClick={() => setPlaying(false)}>
            <path d="M3.500 1.500H16.500V14.500H3.500Z" />
          </PlayButton>
          <PlayButton label="Play" active={playing} onClick={() => setPlaying(true)}>
            <path d="M5 2V14L16 8Z" />
          </PlayButton>
          <PlayButton label="Last frame">
            <path d="M1 3V13L8 8ZM8.500 3V13L15.500 8ZM16 3H19V13H16Z" />
          </PlayButton>
          <input
            aria-label="Current frame"
            value={frame}
            onChange={(e) => setFrame(e.target.value)}
            className="mx-1 w-11 border border-[#242424] bg-[#131313] px-[3px] text-[11px] text-[#dcdcdc] outline-none"
          />
          <div className="flex gap-px">
            <PlayButton small label="Previous frame">
              <path d="M10 1V15L0 8ZM13 1H15V15H13ZM17 1H20V15H17Z" />
            </PlayButton>
            <PlayButton small label="Next frame">
              <path d="M10 1V15L20 8ZM0 1H3V15H0ZM5 1H7V15H5Z" />
            </PlayButton>
          </div>
        </div>
        <div className="flex h-[2px] gap-px">
          <span className="w-6 bg-[#222]" />
          <span className="w-6 bg-[#222]" />
          <span className="w-6 bg-[#1f2a38]" />
          <span className="w-6 bg-[#222]" />
          <span className="ml-1 w-11 bg-[#222]" />
        </div>
      </div>

      {/* frame ruler */}
      <div className="relative flex h-[30px] flex-1 text-[10px] leading-3 text-[#6c6c6c]">
        {frames.map((f) => (
          <div key={f} className="flex min-w-0 flex-1 flex-col justify-between">
            <span className={`pl-px ${f % 15 === 0 ? "text-[#a5a5a5]" : ""}`}>{f > 2 ? f : ""}</span>
            <span className="relative mb-2 h-px bg-[#828282]">
              <span
                className={
                  f % 15 === 0
                    ? "absolute -top-[7px] left-0 h-[14px] w-px bg-[#a0a0a0]"
                    : "absolute -top-1 left-0 h-[9px] w-px bg-[#828282]"
                }
              />
            </span>
          </div>
        ))}
        <span className="absolute left-0 top-[2px] flex h-[17px] w-[23px] items-center justify-center border border-[#e2e2e2] bg-[#0c0c0c] text-[11px] text-[#f0f0f0]">
          {frame}
        </span>
        <svg viewBox="0 0 6 5" className="absolute left-0 top-[18px] h-[5px] w-[6px]" aria-hidden="true">
          <path d="M0.500 0V4.500L5 0.500" fill="#0c0c0c" stroke="#e2e2e2" />
        </svg>
      </div>

      <div className="flex w-[234px] shrink-0 pl-[3px] pr-1">
        <button aria-label="Set key" className="mt-[15px] flex h-9 w-9 shrink-0 items-center justify-center rounded-full bg-[#242424]">
          <svg viewBox="0 0 16 16" className="h-4 w-4" fill="none" stroke="#686868" strokeWidth="2" aria-hidden="true">
            <circle cx="11" cy="5" r="3.500" />
            <path d="M8.500 7.500L2 14M4 12L6 14" />
          </svg>
        </button>
        <button aria-label="Key options" className="-ml-[3px] mt-[23px] flex h-[18px] w-4 shrink-0 items-center justify-center border border-[#232323] bg-[#303030]">
          <svg viewBox="0 0 6 5" className="h-[5px] w-[6px]" aria-hidden="true">
            <path d="M0 0H6L3 5Z" fill="#9b9b9b" />
          </svg>
        </button>
        <div className="ml-2 mt-[9px] flex min-w-0 flex-1 flex-col gap-1">
          <div className="flex gap-[5px]">
            <button aria-label="Scoped channels" className="flex h-[22px] w-[21px] shrink-0 items-center justify-center border border-[#1f1f1f] bg-[#4a4a4a]">
              <svg viewBox="0 0 16 16" className="h-4 w-4" aria-hidden="true">
                <path d="M1 1H11V3H4V15H1Z" fill="#9a9a9a" />
                <path d="M1 4H3V6H1Z" fill="#d03a3a" />
                <path d="M1 7H3V9H1Z" fill="#3ac04a" />
                <path d="M1 10H3V12H1Z" fill="#3a6ad0" />
                <path d="M5 8A4 4 0 0 1 12 5M13 8A4 4 0 0 1 6 11" fill="none" stroke="#ececec" strokeWidth="1.600" />
                <path d="M13 2V7H9ZM5 14V9H9Z" fill="#ececec" />
              </svg>
            </button>
            <button className="flex h-[22px] min-w-0 flex-1 items-center border border-[#1f1f1f] bg-[#4a4a4a] pr-1 text-[10px] text-[#d2d2d2]">
              <span className="flex-1 pl-2">0 keys, 0/0 channels</span>
              <svg viewBox="0 0 8 8" className="h-2 w-2" aria-hidden="true">
                <path d="M4 0L8 8H0Z" fill="#8c8c8c" />
              </svg>
            </button>
          </div>
          <div className="flex gap-[5px]">
            <button aria-label="Animation curves" className="h-5 w-[21px] shrink-0 border border-[#4a4a4a] bg-[#0d0f14]" />
            <button className="flex h-4 min-w-0 flex-1 items-center border border-[#1f1f1f] bg-[#464646] px-3 text-[10px] text-[#d2d2d2]">
              Key All Channels
            </button>
          </div>
        </div>
      </div>
    </footer>
  );
};

const App = () => (
  <div className="flex h-screen flex-col overflow-hidden bg-[#1d1d1d] pt-[2px] font-['Noto_Sans_CJK_SC',sans-serif]">
    <main className="flex min-h-0 flex-1">
      <Viewport />
      <DisplayToolbar />
      <Splitter />
      <NetworkEditor />
    </main>
    <Playbar />
  </div>
);

export default App;
